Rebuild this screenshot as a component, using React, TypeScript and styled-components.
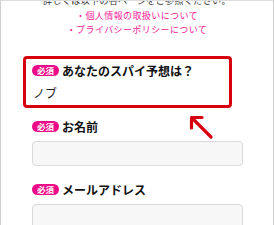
import React from 'react';
import styled, { createGlobalStyle } from 'styled-components';

const GlobalStyle = createGlobalStyle`
  html, body {
    margin: 0;
    padding: 0;
    background: #fff;
  }
  body {
    font-family: "Noto Sans CJK JP", "Noto Sans", sans-serif;
    color: #222;
  }
`;

const Frame = styled.div`
  position: relative;
  box-sizing: border-box;
  width: 274px;
  height: 225px;
  overflow: hidden;
  border-left: 1px solid #cfcfcf;
  border-right: 1px solid #cfcfcf;
  border-top: 1px solid #dcdcdc;
  background: #fff;
`;

const Intro = styled.div`
  margin-top: -7px;
  text-align: center;
  font-size: 9px;
  line-height: 14.5px;
  letter-spacing: 0.4px;
  color: #333;

  a {
    display: block;
    color: #f51b98;
    text-decoration: none;
  }
`;

const Highlight = styled.div`
  box-sizing: border-box;
  width: 209px;
  margin: 18px 0 0 22px;
  padding: 4px 6px 4px;
  border: 3px solid #d7000f;
  border-radius: 4px;
`;

const Field = styled.div<{ $top?: number }>`
  margin: ${(p) => p.$top ?? 0}px 0 0 31px;
`;

const Label = styled.div`
  display: flex;
  align-items: center;
  gap: 3px;
  height: 16px;
  font-size: 12px;
  font-weight: 700;
  color: #111;
`;

const Badge = styled.span`
  display: inline-flex;
  align-items: center;
  justify-content: center;
  width: 27px;
  height: 11px;
  border-radius: 6px;
  background: #ec0a86;
  color: #fff;
  font-size: 8.5px;
  font-weight: 700;
  line-height: 1;
`;

const Answer = styled.div`
  margin-top: 6px;
  padding-left: 1px;
  font-size: 12px;
  line-height: 16px;
  color: #222;
`;

const Input = styled.div`
  box-sizing: border-box;
  width: 211px;
  height: 25px;
  margin-top: 6px;
  border: 1px solid #dadada;
  border-radius: 4px;
  background: #f7f7f7;
`;

const Arrow = styled.svg`
  position: absolute;
  left: 186px;
  top: 112px;
  width: 28px;
  height: 28px;
`;

function Required() {
  return <Badge>必須</Badge>;
}

export default function App() {
  return (
    <>
      <GlobalStyle />
      <Frame>
        <Intro>
          <div>詳しくは以下の各ページをご参照ください。</div>
          <a href="#">・個人情報の取扱いについて</a>
          <a href="#">・プライバシーポリシーについて</a>
        </Intro>

        <Highlight>
          <Label>
            <Required />
            あなたのスパイ予想は？
          </Label>
          <Answer>ノブ</Answer>
        </Highlight>

        <Field $top={11}>
          <Label>
            <Required />
            お名前
          </Label>
          <Input />
        </Field>

        <Field $top={16}>
          <Label>
            <Required />
            メールアドレス
          </Label>
          <Input />
        </Field>

        <Arrow viewBox="0 0 28 28">
          <path d="M24 24 L6 6" stroke="#d7000f" strokeWidth="3.2" strokeLinecap="round" fill="none" />
          <path d="M4.5 15 L4.5 4.5 L15 4.5" stroke="#d7000f" strokeWidth="3.2" strokeLinecap="round" strokeLinejoin="round" fill="none" />
        </Arrow>
      </Frame>
    </>
  );
}
